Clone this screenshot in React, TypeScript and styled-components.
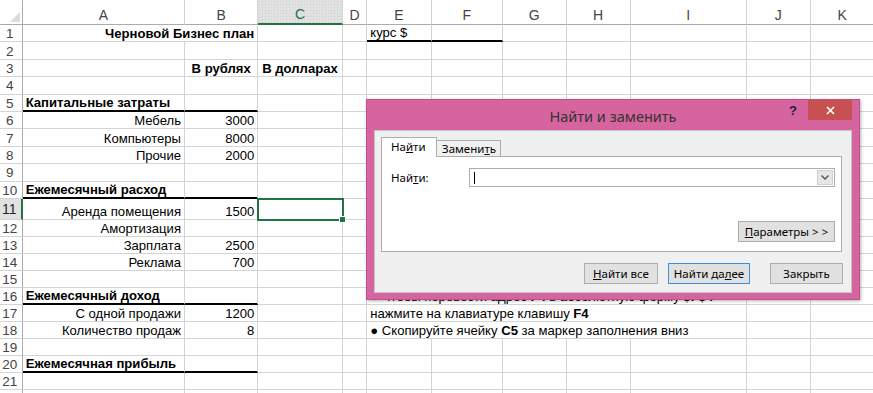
import React from 'react';
import styled, { createGlobalStyle, css } from 'styled-components';

const GlobalStyle = createGlobalStyle`
  html, body { margin: 0; padding: 0; background: #ffffff; }
  body { font-family: "Liberation Sans", Arial, sans-serif; overflow: hidden; }
  #root { width: 873px; height: 393px; }
`;

const GRID_LINE = '#d4d4d4';
const GREEN = '#217346';
const COL_WIDTHS = [162.3, 73.3, 84.4, 24.6, 64.4, 71, 64, 64, 116, 64, 64];
const COL_NAMES = ['A', 'B', 'C', 'D', 'E', 'F', 'G', 'H', 'I', 'J', 'K'];
const ROW_COUNT = 22;
const VISIBLE_LABELS = 21;

const Page = styled.div`
  position: relative;
  width: 873px;
  height: 393px;
  overflow: hidden;
  background: #fff;
`;

const Sheet = styled.div`
  display: grid;
  grid-template-columns: 22.7px ${COL_WIDTHS.map((w) => `${w}px`).join(' ')};
  grid-template-rows: 25px repeat(10, 17.4px) 20.6px repeat(${ROW_COUNT - 11}, 17.1px);
`;

const Corner = styled.div`
  border-right: 1px solid #ababab;
  border-bottom: 1px solid #ababab;
  box-sizing: border-box;
  display: flex;
  align-items: flex-end;
  justify-content: flex-end;
  padding: 0 2px 2px 0;
`;

const ColHeader = styled.div<{ $active?: boolean }>`
  box-sizing: border-box;
  border-right: 1px solid ${GRID_LINE};
  border-bottom: 1px solid #ababab;
  display: flex;
  align-items: flex-end;
  justify-content: center;
  padding-bottom: 0;
  font-size: 14px;
  line-height: 17px;
  color: #444;
  ${(p) =>
    p.$active &&
    css`
      background-color: #e1e1e1;
      background-image: radial-gradient(#cfcfcf 0.6px, transparent 0.7px);
      background-size: 3px 3px;
      border-bottom: 2px solid ${GREEN};
      color: ${GREEN};
    `}
`;

const RowHeader = styled.div<{ $active?: boolean }>`
  box-sizing: border-box;
  border-right: 1px solid #ababab;
  border-bottom: 1px solid ${GRID_LINE};
  display: flex;
  align-items: center;
  justify-content: center;
  padding-right: 2px;
  padding-top: 1px;
  font-size: 13.5px;
  line-height: 15px;
  color: #444;
  ${(p) =>
    p.$active &&
    css`
      background: #e1e1e1;
      border-right: 2px solid ${GREEN};
      color: #262626;
      font-size: 14px;
    `}
`;

type Align = 'left' | 'right' | 'center';

const Cell = styled.div<{ $span?: number; $align?: Align; $bold?: boolean; $thick?: boolean; $selected?: boolean }>`
  grid-column: span ${(p) => p.$span ?? 1};
  box-sizing: border-box;
  position: relative;
  border-right: 1px solid ${GRID_LINE};
  border-bottom: ${(p) => (p.$thick ? '2px solid #000' : `1px solid ${GRID_LINE}`)};
  display: flex;
  align-items: flex-end;
  justify-content: ${(p) => (p.$align === 'right' ? 'flex-end' : p.$align === 'center' ? 'center' : 'flex-start')};
  padding: 0 3px;
  font-size: 13.1px;
  line-height: 14px;
  font-weight: ${(p) => (p.$bold ? 700 : 400)};
  color: #000;
  white-space: nowrap;
  ${(p) =>
    p.$selected &&
    css`
      z-index: 2;
      outline: 2px solid ${GREEN};
      outline-offset: -1px;
      &::after {
        content: '';
        position: absolute;
        right: -4px;
        bottom: -4px;
        width: 5px;
        height: 5px;
        background: ${GREEN};
        border: 1px solid #fff;
      }
    `}
`;

const CellText = styled.span``;

type CellDef = { t?: React.ReactNode; span?: number; align?: Align; bold?: boolean; thick?: boolean; sel?: boolean };

const L = (t: React.ReactNode, extra: Partial<CellDef> = {}): CellDef => ({ t, align: 'right', ...extra });

const DATA: Record<number, Record<number, CellDef>> = {
  1: {
    0: { t: 'Черновой Бизнес план', span: 2, align: 'right', bold: true },
    4: { t: 'курс $', thick: true },
    5: { thick: true },
  },
  3: {
    1: { t: 'В рублях', align: 'center', bold: true },
    2: { t: 'В долларах', align: 'center', bold: true },
  },
  5: { 0: { t: 'Капитальные затраты', bold: true, thick: true }, 1: { thick: true } },
  6: { 0: L('Мебель'), 1: L('3000') },
  7: { 0: L('Компьютеры'), 1: L('8000') },
  8: { 0: L('Прочие'), 1: L('2000') },
  10: { 0: { t: 'Ежемесячный расход', bold: true, thick: true }, 1: { thick: true } },
  11: { 0: L('Аренда помещения'), 1: L('1500'), 2: { sel: true } },
  12: { 0: L('Амортизация') },
  13: { 0: L('Зарплата'), 1: L('2500') },
  14: { 0: L('Реклама'), 1: L('700') },
  16: {
    0: { t: 'Ежемесячный доход', bold: true, thick: true },
    1: { thick: true },
    4: {
      span: 5,
      t: (
        <>
          ● Чтобы перевести адрес <b>F4</b> в абсолютную форму <b>$F$4</b>
        </>
      ),
    },
  },
  17: {
    0: L('С одной продажи'),
    1: L('1200'),
    4: {
      span: 5,
      t: (
        <>
          нажмите на клавиатуре клавишу <b>F4</b>
        </>
      ),
    },
  },
  18: {
    0: L('Количество продаж'),
    1: L('8'),
    4: {
      span: 5,
      t: (
        <>
          ● Скопируйте ячейку <b>C5</b> за маркер заполнения вниз
        </>
      ),
    },
  },
  20: { 0: { t: 'Ежемесячная прибыль', bold: true, thick: true }, 1: { thick: true } },
};

function renderRow(r: number) {
  const defs = DATA[r] ?? {};
  const out: React.ReactNode[] = [
    <RowHeader key={`h${r}`} $active={r === 11}>
      {r <= VISIBLE_LABELS ? r : null}
    </RowHeader>,
  ];
  let c = 0;
  while (c < COL_NAMES.length) {
    const d = defs[c];
    if (d) {
      out.push(
        <Cell key={`${r}-${c}`} $span={d.span} $align={d.align} $bold={d.bold} $thick={d.thick} $selected={d.sel}>
          {d.t !== undefined ? <CellText>{d.t}</CellText> : null}
        </Cell>
      );
      c += d.span ?? 1;
    } else {
      out.push(<Cell key={`${r}-${c}`} />);
      c += 1;
    }
  }
  return out;
}

/* ---------- Dialog ---------- */

const DIALOG_FONT = `"Noto Sans", "Open Sans", "Liberation Sans", sans-serif`;

const Dialog = styled.div`
  position: absolute;
  left: 366px;
  top: 99px;
  width: 494px;
  height: 201px;
  box-sizing: border-box;
  background: #d6659f;
  border: 1px solid #c0508a;
  box-shadow: 1px 1px 3px rgba(0, 0, 0, 0.3);
  display: flex;
  flex-direction: column;
  padding: 0 7px 6px 7px;
  font-family: ${DIALOG_FONT};
  z-index: 5;
`;

const TitleBar = styled.div`
  height: 30px;
  display: grid;
  grid-template-columns: 1fr auto 1fr;
  align-items: center;
`;

const Title = styled.div`
  grid-column: 2;
  font-size: 14.5px;
  color: #333;
  padding-top: 1px;
`;

const TitleControls = styled.div`
  grid-column: 3;
  align-self: start;
  display: flex;
  justify-content: flex-end;
  align-items: flex-start;
  gap: 11px;
`;

const HelpMark = styled.span`
  font-family: "Liberation Sans", Arial, sans-serif;
  font-weight: 700;
  font-size: 13px;
  color: #1f1f3a;
  margin-top: 3px;
`;

const CloseButton = styled.div`
  width: 44px;
  height: 20px;
  background: #c75050;
  display: flex;
  align-items: center;
  justify-content: center;
`;

const Body = styled.div`
  flex: 1;
  background: #f0f0f0;
  border: 1px solid rgba(0, 0, 0, 0.18);
  display: flex;
  flex-direction: column;
  padding: 7px 8px 8px 6px;
`;

const Tabs = styled.div`
  display: flex;
  align-items: flex-end;
  height: 19px;
  margin-bottom: -1px;
  position: relative;
  z-index: 1;
`;

const Tab = styled.div<{ $active?: boolean }>`
  box-sizing: border-box;
  border: 1px solid #adadad;
  font-size: 11.5px;
  color: #000;
  display: flex;
  align-items: center;
  ${(p) =>
    p.$active
      ? css`
          height: 20px;
          width: 56px;
          background: #fff;
          border-bottom: none;
          padding: 0 0 2px 9px;
        `
      : css`
          height: 17px;
          width: 64px;
          background: #f0f0f0;
          border-left: none;
          padding: 0 0 1px 5px;
        `}
`;

const TabPanel = styled.div`
  height: 96px;
  box-sizing: border-box;
  background: #fff;
  border: 1px solid #adadad;
  margin-right: 1px;
  display: flex;
  flex-direction: column;
  padding: 11px 6px 0 9px;
`;

const FindRow = styled.div`
  display: flex;
  align-items: center;
`;

const FieldLabel = styled.div`
  width: 78px;
  font-size: 11.5px;
  color: #000;
`;

const Combo = styled.div`
  flex: 1;
  height: 19px;
  box-sizing: border-box;
  border: 1px solid #abadb3;
  background: #fff;
  display: flex;
  align-items: center;
  justify-content: space-between;
  padding: 0 1px 0 4px;
`;

const Caret = styled.div`
  width: 1px;
  height: 12px;
  background: #000;
`;

const ComboButton = styled.div`
  width: 16px;
  height: 15px;
  box-sizing: border-box;
  background: #e6e6e6;
  border: 1px solid #cfcfcf;
  display: flex;
  align-items: center;
  justify-content: center;
`;

const OptionsRow = styled.div`
  display: flex;
  justify-content: flex-end;
  margin-top: 34px;
`;

const Button = styled.div<{ $w: number; $default?: boolean }>`
  width: ${(p) => p.$w}px;
  height: 21px;
  box-sizing: border-box;
  background: #e1e1e1;
  border: 1px solid ${(p) => (p.$default ? '#3c8fe0' : '#adadad')};
  display: flex;
  align-items: center;
  justify-content: center;
  font-size: 11.5px;
  color: #000;
  padding-bottom: 1px;
`;

const ButtonRow = styled.div`
  display: flex;
  justify-content: flex-end;
  margin-top: 11px;
`;

const Spacer = styled.div<{ $w: number }>`
  width: ${(p) => p.$w}px;
`;

export default function App() {
  const rows: React.ReactNode[] = [];
  for (let r = 1; r <= ROW_COUNT; r++) rows.push(...renderRow(r));

  return (
    <Page>
      <GlobalStyle />
      <Sheet>
        <Corner>
          <svg width="10" height="10" viewBox="0 0 10 10">
            <polygon points="10,0 10,10 0,10" fill="#dcdcdc" />
          </svg>
        </Corner>
        {COL_NAMES.map((n) => (
          <ColHeader key={n} $active={n === 'C'}>
            {n}
          </ColHeader>
        ))}
        {rows}
      </Sheet>

      <Dialog>
        <TitleBar>
          <Title>Найти и заменить</Title>
          <TitleControls>
            <HelpMark>?</HelpMark>
            <CloseButton>
              <svg width="9" height="9" viewBox="0 0 9 9">
                <path d="M1 1 L8 8 M8 1 L1 8" stroke="#fff" strokeWidth="1.7" />
              </svg>
            </CloseButton>
          </TitleControls>
        </TitleBar>
        <Body>
          <Tabs>
            <Tab $active>
              На<u>й</u>ти
            </Tab>
            <Tab>
              Замени<u>т</u>ь
            </Tab>
          </Tabs>
          <TabPanel>
            <FindRow>
              <FieldLabel>
                Най<u>т</u>и:
              </FieldLabel>
              <Combo>
                <Caret />
                <ComboButton>
                  <svg width="8" height="5" viewBox="0 0 8 5">
                    <path d="M0.5 0.5 L4 4 L7.5 0.5" stroke="#5a4a5a" strokeWidth="1.3" fill="none" />
                  </svg>
                </ComboButton>
              </Combo>
            </FindRow>
            <OptionsRow>
              <Button $w={97}>
                <u>П</u>араметры &gt; &gt;
              </Button>
            </OptionsRow>
          </TabPanel>
          <ButtonRow>
            <Button $w={74}>
              <u>Н</u>айти все
            </Button>
            <Spacer $w={10} />
            <Button $w={82} $default>
              Найти да<u>л</u>ее
            </Button>
            <Spacer $w={20} />
            <Button $w={73}>Закрыть</Button>
          </ButtonRow>
        </Body>
      </Dialog>
    </Page>
  );
}
